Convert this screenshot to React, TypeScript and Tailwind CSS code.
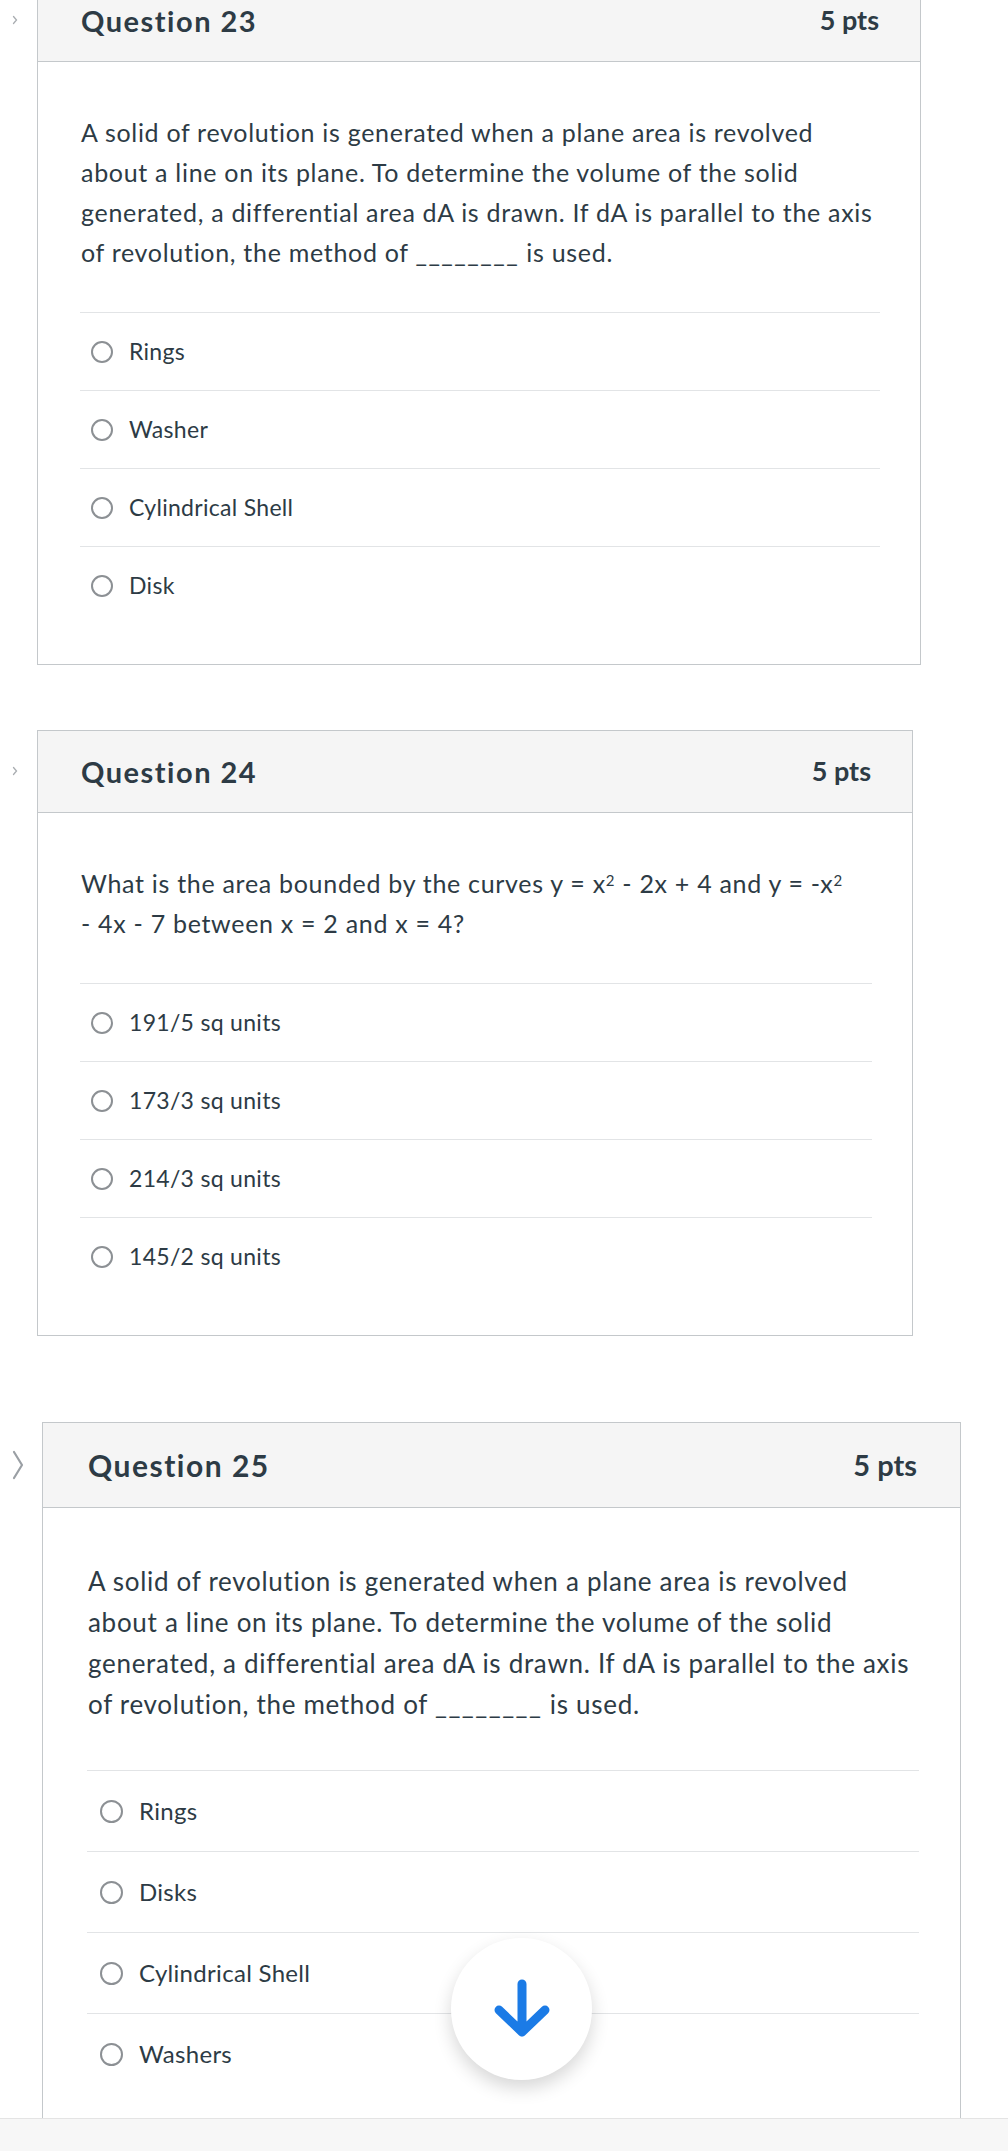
import type { ReactNode } from "react";

type Size = "md" | "lg";

const sizes = {
  md: {
    header: "h-[82px] pl-[43px] pr-[41px]",
    title: "text-[29px] tracking-[1.5px]",
    pts: "text-[27px]",
    body: "pt-[50px] pb-[40px] pl-[42px] pr-[40px]",
    text: "text-[25px] tracking-[0.7px] leading-[40px] pl-[1px]",
    rule: "mt-[40px]",
    row: "h-[78px] pl-[11px] gap-[16px] text-[23px] tracking-[0.3px]",
    radio: "w-[22px] h-[22px] border-[2.5px]",
  },
  lg: {
    header: "h-[85px] pl-[45px] pr-[43px]",
    title: "text-[30px] tracking-[1.5px]",
    pts: "text-[29px]",
    body: "pt-[53px] pb-[40px] pl-[44px] pr-[41px]",
    text: "text-[26px] tracking-[0.7px] leading-[41px] pl-[1px]",
    rule: "mt-[45px]",
    row: "h-[81px] pl-[13px] gap-[16px] text-[24px] tracking-[0.3px]",
    radio: "w-[23px] h-[23px] border-[2.5px]",
  },
};

function Blank() {
  return <span className="tracking-[1.5px]">________</span>;
}

function Marker({ big }: { big?: boolean }) {
  if (big) {
    return (
      <svg width="12" height="30" viewBox="0 0 12 30" className="ml-[12px]">
        <path d="M2 2 L10 15 L2 28" fill="none" stroke="#9a9fa4" strokeWidth="2.2" strokeLinecap="round" strokeLinejoin="round" />
      </svg>
    );
  }
  return (
    <svg width="6" height="10" viewBox="0 0 6 10" className="ml-[12px]">
      <path d="M1.5 1.5 L4.5 5 L1.5 8.5" fill="none" stroke="#a9adb1" strokeWidth="1.3" strokeLinecap="round" />
    </svg>
  );
}

function QuestionCard({
  title,
  size,
  width,
  big,
  children,
  options,
}: {
  title: string;
  size: Size;
  width: string;
  big?: boolean;
  children: ReactNode;
  options: string[];
}) {
  const s = sizes[size];
  return (
    <div className="flex items-start">
      <div className={`flex items-center shrink-0 ${big ? "w-[42px] h-[85px]" : "w-[37px] h-[82px]"}`}>
        <Marker big={big} />
      </div>
      <div className={`border border-[#c4c8cb] bg-white ${width}`}>
        <div className={`flex items-center justify-between bg-[#f5f5f5] border-b border-[#c4c8cb] ${s.header}`}>
          <span className={`font-bold text-[#2d3b45] ${s.title}`}>{title}</span>
          <span className={`font-bold text-[#2d3b45] ${s.pts}`}>5 pts</span>
        </div>
        <div className={s.body}>
          <div className={`text-[#2d3b45] ${s.text}`}>{children}</div>
          <div className={s.rule}>
            {options.map((o) => (
              <div key={o} className={`flex items-center border-t border-[#e2e4e6] text-[#2d3b45] ${s.row}`}>
                <span className={`rounded-full border-[#8c9094] shrink-0 ${s.radio}`} />
                <span>{o}</span>
              </div>
            ))}
          </div>
        </div>
      </div>
    </div>
  );
}

function SolidText() {
  return (
    <>
      <span className="block whitespace-nowrap">A solid of revolution is generated when a plane area is revolved</span>
      <span className="block whitespace-nowrap">about a line on its plane. To determine the volume of the solid</span>
      <span className="block whitespace-nowrap">generated, a differential area dA is drawn. If dA is parallel to the axis</span>
      <span className="block whitespace-nowrap">
        of revolution, the method of <Blank /> is used.
      </span>
    </>
  );
}

export default function App() {
  return (
    <div className="relative flex flex-col h-[2151px] overflow-hidden bg-white font-['Lato','Noto_Sans',sans-serif]">
      <div className="flex-1 overflow-hidden">
        <div className="-mt-[21px]">
          <QuestionCard title="Question 23" size="md" width="w-[884px]" options={["Rings", "Washer", "Cylindrical Shell", "Disk"]}>
            <SolidText />
          </QuestionCard>

          <div className="mt-[65px]">
            <QuestionCard
              title="Question 24"
              size="md"
              width="w-[876px]"
              options={["191/5 sq units", "173/3 sq units", "214/3 sq units", "145/2 sq units"]}
            >
              <span className="block whitespace-nowrap">
                What is the area bounded by the curves y = x<sup className="text-[15px]">2</sup> - 2x + 4 and y = -x
                <sup className="text-[15px]">2</sup>
              </span>
              <span className="block whitespace-nowrap">- 4x - 7 between x = 2 and x = 4?</span>
            </QuestionCard>
          </div>

          <div className="mt-[86px]">
            <QuestionCard
              title="Question 25"
              size="lg"
              width="w-[919px]"
              big
              options={["Rings", "Disks", "Cylindrical Shell", "Washers"]}
            >
              <SolidText />
            </QuestionCard>
          </div>
        </div>
      </div>
      <div className="h-[33px] shrink-0 bg-[#f7f7f7] border-t border-[#e4e4e4]" />

      <button className="absolute left-[451px] top-[1938px] w-[141px] h-[142px] rounded-full bg-white flex items-center justify-center shadow-[0_8px_18px_rgba(0,0,0,0.16)]">
        <svg width="58" height="60" viewBox="0 0 58 60">
          <path d="M29 5 V53 M6 31 L29 53 L52 31" fill="none" stroke="#1b7be6" strokeWidth="9" strokeLinecap="round" strokeLinejoin="round" />
        </svg>
      </button>
    </div>
  );
}
